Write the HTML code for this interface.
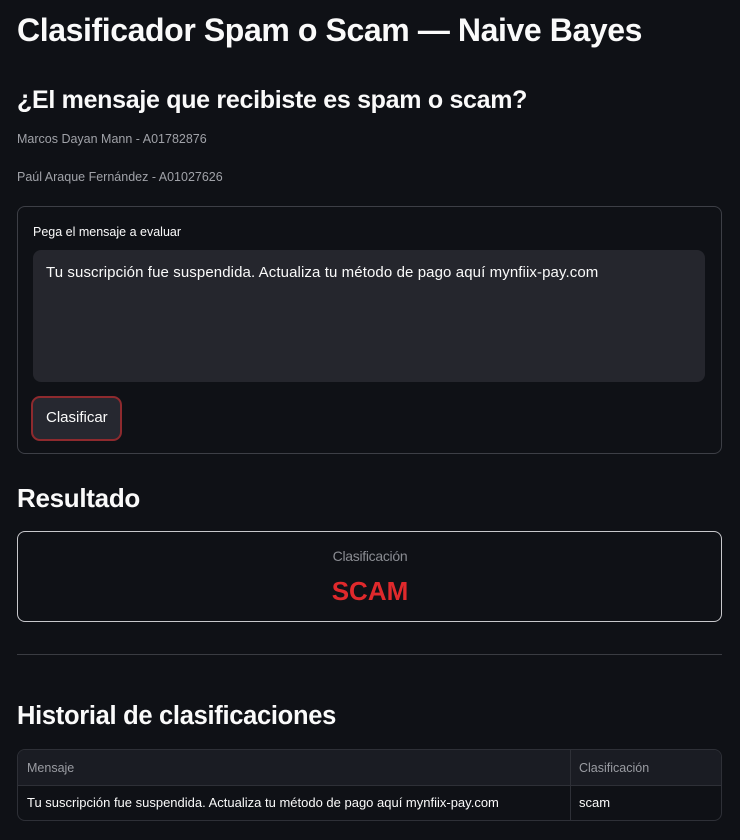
<!DOCTYPE html>
<html><head><meta charset="utf-8"><style>
*{box-sizing:border-box;margin:0;padding:0}
body{width:740px;height:840px;background:#0f1116;color:#fafafa;font-family:"Liberation Sans",sans-serif;position:relative;overflow:hidden}
.a{position:absolute;white-space:nowrap}
h1{font-size:32px;font-weight:bold;letter-spacing:-0.4px}
h2{font-size:25px;font-weight:bold;letter-spacing:-0.3px}
.small{font-size:12.5px;color:#a0a2a8}
.box{position:absolute;border:1px solid #3d3f46;border-radius:8px}
</style></head><body>
<div class="a" style="left:17px;top:12px"><h1>Clasificador Spam o Scam — Naive Bayes</h1></div>
<div class="a" style="left:17px;top:86px"><h2>¿El mensaje que recibiste es spam o scam?</h2></div>
<div class="a small" style="left:17px;top:132px">Marcos Dayan Mann - A01782876</div>
<div class="a small" style="left:17px;top:170px">Paúl Araque Fernández - A01027626</div>
<div class="box" style="left:17px;top:206px;width:705px;height:248px"></div>
<div class="a" style="left:33px;top:225px;font-size:12.5px">Pega el mensaje a evaluar</div>
<div class="a" style="left:33px;top:250px;width:672px;height:132px;background:#25262d;border-radius:8px"></div>
<div class="a" style="left:46px;top:264px;font-size:15px;letter-spacing:0.1px">Tu suscripción fue suspendida. Actualiza tu método de pago aquí mynfiix-pay.com</div>
<div class="a" style="left:31px;top:396px;width:91px;height:45px;border:2px solid #8e2a2e;border-radius:9px;background:#262830"></div>
<div class="a" style="left:46px;top:409px;font-size:15px">Clasificar</div>
<div class="a" style="left:17px;top:483px"><h2 style="font-size:26px">Resultado</h2></div>
<div class="box" style="left:17px;top:531px;width:705px;height:91px;border-color:#c8c8cc"></div>
<div class="a" style="left:0;width:740px;text-align:center;top:548px;font-size:14px;color:#8a8c92;letter-spacing:-0.3px">Clasificación</div>
<div class="a" style="left:0;width:740px;text-align:center;top:576px;font-size:26px;font-weight:bold;color:#e0292c">SCAM</div>
<div class="a" style="left:17px;top:654px;width:705px;height:1px;background:#3a3c42"></div>
<div class="a" style="left:17px;top:702px"><h2 style="font-size:25.5px">Historial de clasificaciones</h2></div>
<div class="box" style="left:17px;top:749px;width:705px;height:72px;border-color:#2e3037;overflow:hidden">
<div style="position:absolute;left:0;top:0;width:705px;height:36px;background:#1a1c23;border-bottom:1px solid #2e3037"></div>
<div style="position:absolute;left:552px;top:0;width:1px;height:72px;background:#2e3037"></div>
<div class="a" style="left:9px;top:11px;font-size:12.5px;color:#9a9ca2">Mensaje</div>
<div class="a" style="left:561px;top:11px;font-size:12.5px;color:#9a9ca2">Clasificación</div>
<div class="a" style="left:9px;top:45px;font-size:13px">Tu suscripción fue suspendida. Actualiza tu método de pago aquí mynfiix-pay.com</div>
<div class="a" style="left:561px;top:45px;font-size:13px">scam</div>
</div>
</body></html>
